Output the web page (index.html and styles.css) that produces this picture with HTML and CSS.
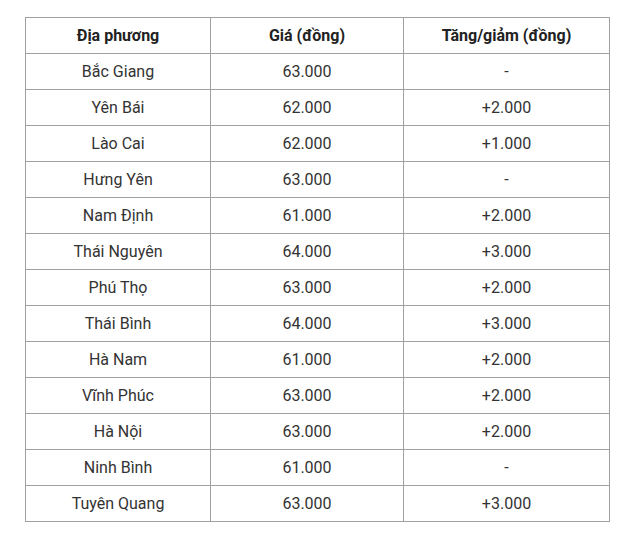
FILE: index.html
```html
<!DOCTYPE html>
<html lang="vi">
<head>
<meta charset="utf-8">
<link rel="stylesheet" href="styles.css">
</head>
<body>
<div class="wrap">
<table class="price">
<colgroup><col class="c1"><col class="c2"><col class="c3"></colgroup>
<thead>
<tr><th>Địa phương</th><th>Giá (đồng)</th><th>Tăng/giảm (đồng)</th></tr>
</thead>
<tbody>
<tr><td>Bắc Giang</td><td>63.000</td><td>-</td></tr>
<tr><td>Yên Bái</td><td>62.000</td><td>+2.000</td></tr>
<tr><td>Lào Cai</td><td>62.000</td><td>+1.000</td></tr>
<tr><td>Hưng Yên</td><td>63.000</td><td>-</td></tr>
<tr><td>Nam Định</td><td>61.000</td><td>+2.000</td></tr>
<tr><td>Thái Nguyên</td><td>64.000</td><td>+3.000</td></tr>
<tr><td>Phú Thọ</td><td>63.000</td><td>+2.000</td></tr>
<tr><td>Thái Bình</td><td>64.000</td><td>+3.000</td></tr>
<tr><td>Hà Nam</td><td>61.000</td><td>+2.000</td></tr>
<tr><td>Vĩnh Phúc</td><td>63.000</td><td>+2.000</td></tr>
<tr><td>Hà Nội</td><td>63.000</td><td>+2.000</td></tr>
<tr><td>Ninh Bình</td><td>61.000</td><td>-</td></tr>
<tr><td>Tuyên Quang</td><td>63.000</td><td>+3.000</td></tr>
</tbody>
</table>
</div>
</body>
</html>
```
FILE: styles.css
```css
html, body {
  margin: 0;
  padding: 0;
  background: #fff;
}
.wrap {
  padding: 17px 0 0 25px;
}
.price {
  border-collapse: collapse;
  table-layout: fixed;
  width: 584px;
  font-family: Roboto, "Liberation Sans", sans-serif;
  font-size: 16px;
  color: #333;
}
.c1 { width: 185px; }
.c2 { width: 193px; }
.c3 { width: 206px; }
.price th, .price td {
  border: 1px solid #a0a0a0;
  height: 36px;
  padding: 0 4px;
  text-align: center;
  vertical-align: middle;
  box-sizing: border-box;
  line-height: 20px;
}
.price th {
  font-weight: 700;
  color: #222;
}
```
